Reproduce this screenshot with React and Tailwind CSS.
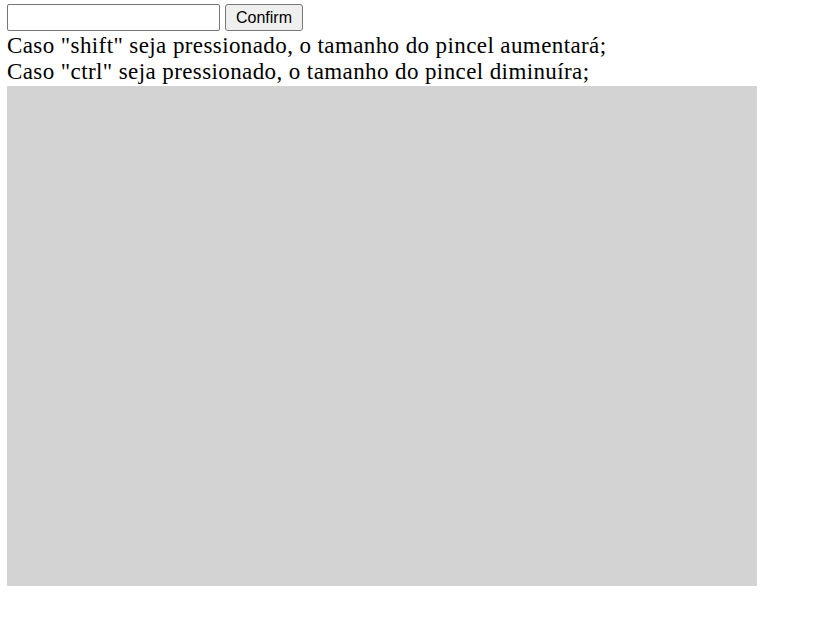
export default function App() {
  return (
    <div className="pl-[7px] pt-[4px] bg-white min-h-[631px]">
      <div className="flex items-center gap-[5px] h-[27px]">
        <input
          type="text"
          className="w-[213px] h-[27px] border border-[#767676] rounded-[2px] bg-white px-1 outline-none"
        />
        <button className="w-[78px] h-[27px] border border-[#767676] rounded-[3px] bg-[#efefef] text-[16px] text-black font-['Liberation_Sans',Arial,sans-serif] leading-none">
          Confirm
        </button>
      </div>
      <div className="font-['Liberation_Serif','Times_New_Roman',serif] text-[23px] leading-[26px] tracking-[0.4px] text-black mt-[2px] whitespace-nowrap">
        <div>Caso "shift" seja pressionado, o tamanho do pincel aumentará;</div>
        <div>Caso "ctrl" seja pressionado, o tamanho do pincel diminuíra;</div>
      </div>
      <div className="w-[750px] h-[500px] bg-[#d3d3d3] mt-[1px]" />
    </div>
  );
}
